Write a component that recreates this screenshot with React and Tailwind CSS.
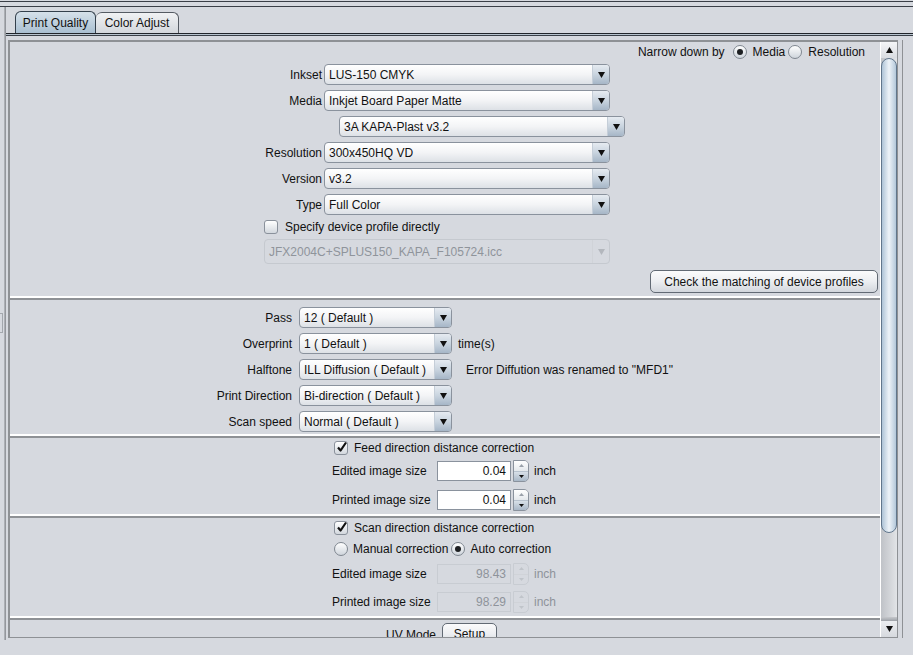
import React from 'react'

function Arrow({ up = false, w = 7, h = 6 }) {
  return (
    <svg width={w} height={h} viewBox={`0 0 ${w} ${h}`} aria-hidden>
      <polygon points={up ? `0,${h} ${w},${h} ${w / 2},0` : `0,0 ${w},0 ${w / 2},${h}`} fill="currentColor" />
    </svg>
  )
}

function Combo({ value, className = '', disabled = false }) {
  return (
    <div
      className={[
        'flex shrink-0 overflow-hidden rounded-[4px] border',
        disabled
          ? 'h-[25px] border-[#c5c9cf] bg-[#d6d9df] text-[#8f949b]'
          : 'h-[21px] border-[#8a929d] bg-gradient-to-b from-[#ffffff] via-[#f3f4f6] to-[#dde1e6]',
        className,
      ].join(' ')}
    >
      <div className="flex min-w-0 flex-1 items-center truncate pl-[4px]">{value}</div>
      <div
        className={[
          'flex w-[17px] items-center justify-center border-l',
          disabled
            ? 'border-[#d0d3d8] text-[#b3b7bd]'
            : 'border-[#c5ced8] bg-gradient-to-b from-[#e6ebf1] via-[#c9d4df] to-[#a6b6c7] text-[#111]',
        ].join(' ')}
      >
        <Arrow />
      </div>
    </div>
  )
}

function Check({ checked = false }) {
  return (
    <div className="relative flex h-[14px] w-[14px] shrink-0 items-center justify-center rounded-[3px] border border-[#8a919b] bg-gradient-to-b from-[#ffffff] to-[#d3d8de]">
      {checked ? (
        <svg width="12" height="12" viewBox="0 0 12 12" className="absolute -top-[1px] left-[1px]" aria-hidden>
          <path d="M2 6.5 L4.6 9.5 L10 1.5" fill="none" stroke="#111" strokeWidth="2.2" strokeLinejoin="round" />
        </svg>
      ) : null}
    </div>
  )
}

function Radio({ checked = false }) {
  return (
    <div className="flex h-[14px] w-[14px] shrink-0 items-center justify-center rounded-full border border-[#7f8790] bg-gradient-to-b from-[#ffffff] to-[#cfd5dc]">
      {checked ? <div className="h-[6px] w-[6px] rounded-full bg-[#1d1f22]" /> : null}
    </div>
  )
}

function Field({ value, disabled = false }) {
  return (
    <div className="flex items-center">
      <div
        className={[
          'flex h-[20px] w-[74px] items-center justify-end border pr-[4px]',
          disabled ? 'border-[#c8ccd2] bg-[#d6d9df] text-[#8e939a]' : 'border-[#8a929d] bg-white text-[#111]',
        ].join(' ')}
      >
        {value}
      </div>
      <div
        className={[
          'ml-[2px] flex h-[22px] w-[16px] flex-col overflow-hidden rounded-r-[5px] border',
          disabled ? 'border-[#c8ccd2]' : 'border-[#8a929d]',
        ].join(' ')}
      >
        <div
          className={[
            'flex flex-1 items-center justify-center',
            disabled ? 'text-[#c0c4ca]' : 'bg-gradient-to-b from-white to-[#e4e8ec] text-[#9aa1aa]',
          ].join(' ')}
        >
          <Arrow up w={5} h={3} />
        </div>
        <div
          className={[
            'flex flex-1 items-center justify-center border-t',
            disabled
              ? 'border-[#d0d3d8] text-[#c0c4ca]'
              : 'border-[#b7c2ce] bg-gradient-to-b from-[#d8e0e8] to-[#a9b8c8] text-[#111]',
          ].join(' ')}
        >
          <Arrow w={5} h={3} />
        </div>
      </div>
      <span className={['ml-[5px]', disabled ? 'text-[#8e939a]' : ''].join(' ')}>inch</span>
    </div>
  )
}

function Button({ children, className = '' }) {
  return (
    <div
      className={[
        'flex items-center justify-center rounded-[5px] border border-[#626a74] bg-gradient-to-b from-[#fbfbfc] via-[#eceef1] to-[#d3d7dd]',
        className,
      ].join(' ')}
    >
      {children}
    </div>
  )
}

const S1_ROWS = [
  { label: 'Inkset', value: 'LUS-150 CMYK' },
  { label: 'Media', value: 'Inkjet Board Paper Matte' },
  { label: '', value: '3A KAPA-Plast v3.2', shifted: true },
  { label: 'Resolution', value: '300x450HQ VD' },
  { label: 'Version', value: 'v3.2' },
  { label: 'Type', value: 'Full Color' },
]

const S2_ROWS = [
  { label: 'Pass', value: '12 ( Default )' },
  { label: 'Overprint', value: '1 ( Default )', after: 'time(s)', gap: 'ml-[6px]' },
  { label: 'Halftone', value: 'ILL Diffusion ( Default )', after: 'Error Diffution was renamed to "MFD1"', gap: 'ml-[14px]' },
  { label: 'Print Direction', value: 'Bi-direction ( Default )' },
  { label: 'Scan speed', value: 'Normal ( Default )' },
]

export default function App() {
  return (
    <div className="h-[655px] w-[913px] overflow-hidden bg-[#d6d9df] font-['Liberation_Sans',Arial,sans-serif] text-[12px] leading-none text-[#111]">
      <div className="mt-[1px] h-[1px] bg-[#3a3f47]" />
      <div className="mt-[4px] h-[1px] bg-[#3a3f47]" />

      <div className="flex">
        {/* left gutter */}
        <div className="w-[4px]">
          <div className="ml-[0px] mt-[306px] h-[20px] w-[3px] border border-l-0 border-[#a3a7ad]" />
        </div>
        <div className="h-[633px] w-[2px] bg-gradient-to-r from-[#b9bcc1] to-[#878a90]" />

        <div className="flex min-w-0 flex-1 flex-col">
          {/* tabs */}
          <div className="flex pl-[9px] pt-[4px]">
            <div className="flex h-[22px] w-[81px] items-center justify-center rounded-t-[6px] border border-b-0 border-[#34404c] bg-gradient-to-b from-[#d6e1ea] to-[#a9bfd1]">
              Print Quality
            </div>
            <div className="mt-[1px] flex h-[21px] w-[83px] items-center justify-center rounded-t-[6px] border border-b-0 border-l-0 border-[#555b63] bg-gradient-to-b from-[#f1f2f4] to-[#d3d7dc]">
              Color Adjust
            </div>
          </div>
          <div className="h-[1px] bg-[#20242a]" />
          <div className="h-[1px] bg-[#b7c3ce]" />
          <div className="h-[1px] bg-[#3a4048]" />

          <div className="mt-[4px] flex">
            {/* scroll pane */}
            <div className="ml-[2px] flex h-[598px] w-[890px] border-l-2 border-t-2 border-r border-b border-[#8e9195]">
              <div className="h-[595px] w-[871px] overflow-hidden border-r border-white">
                {/* section 1 */}
                <div className="flex h-[256px] flex-col border-b-2 border-white">
                  <div className="mt-[2px] flex h-[16px] items-center justify-end pr-[15px]">
                    <span>Narrow down by</span>
                    <span className="ml-[8px]"><Radio checked /></span>
                    <span className="ml-[6px]">Media</span>
                    <span className="ml-[3px]"><Radio /></span>
                    <span className="ml-[6px]">Resolution</span>
                  </div>
                  {S1_ROWS.map((r, i) => (
                    <div key={r.value} className={['flex h-[21px] items-center', i === 0 ? 'mt-[4px]' : 'mt-[5px]'].join(' ')}>
                      {r.shifted ? (
                        <Combo value={r.value} className="ml-[329px] w-[286px]" />
                      ) : (
                        <>
                          <div className="w-[312px] text-right">{r.label}</div>
                          <Combo value={r.value} className="ml-[2px] w-[286px]" />
                        </>
                      )}
                    </div>
                  ))}
                  <div className="mt-[5px] flex h-[14px] items-center pl-[254px]">
                    <Check />
                    <span className="ml-[7px]">Specify device profile directly</span>
                  </div>
                  <div className="mt-[5px] flex pl-[254px]">
                    <Combo value="JFX2004C+SPLUS150_KAPA_F105724.icc" disabled className="w-[346px]" />
                  </div>
                  <div className="mt-[6px] flex justify-end pr-[2px]">
                    <Button className="h-[23px] w-[228px]">Check the matching of device profiles</Button>
                  </div>
                </div>

                {/* section 2 */}
                <div className="flex h-[138px] flex-col border-b-2 border-t-2 border-b-white border-t-[#8e9195]">
                  {S2_ROWS.map((r, i) => (
                    <div key={r.label} className={['flex h-[21px] items-center', i === 0 ? 'mt-[7px]' : 'mt-[5px]'].join(' ')}>
                      <div className="w-[282px] text-right">{r.label}</div>
                      <Combo value={r.value} className="ml-[7px] w-[153px]" />
                      {r.after ? <span className={r.gap}>{r.after}</span> : null}
                    </div>
                  ))}
                </div>

                {/* section 3 */}
                <div className="flex h-[80px] flex-col border-b-2 border-t-2 border-b-white border-t-[#8e9195] pl-[322px]">
                  <div className="mt-[3px] flex h-[14px] items-center pl-[2px]">
                    <Check checked />
                    <span className="ml-[6px]">Feed direction distance correction</span>
                  </div>
                  <div className="mt-[5px] flex h-[22px] items-center">
                    <div className="w-[105px]">Edited image size</div>
                    <Field value="0.04" />
                  </div>
                  <div className="mt-[7px] flex h-[22px] items-center">
                    <div className="w-[105px]">Printed image size</div>
                    <Field value="0.04" />
                  </div>
                </div>

                {/* section 4 */}
                <div className="flex h-[102px] flex-col border-b-2 border-t-2 border-b-white border-t-[#8e9195] pl-[322px]">
                  <div className="mt-[3px] flex h-[14px] items-center pl-[2px]">
                    <Check checked />
                    <span className="ml-[6px]">Scan direction distance correction</span>
                  </div>
                  <div className="mt-[7px] flex h-[14px] items-center pl-[2px]">
                    <Radio />
                    <span className="ml-[5px]">Manual correction</span>
                    <span className="ml-[3px]"><Radio checked /></span>
                    <span className="ml-[5px]">Auto correction</span>
                  </div>
                  <div className="mt-[7px] flex h-[22px] items-center">
                    <div className="w-[105px]">Edited image size</div>
                    <Field value="98.43" disabled />
                  </div>
                  <div className="mt-[6px] flex h-[22px] items-center">
                    <div className="w-[105px]">Printed image size</div>
                    <Field value="98.29" disabled />
                  </div>
                </div>

                {/* section 5 */}
                <div className="flex h-[40px] border-t-2 border-[#8e9195]">
                  <div className="mt-[9px] w-[426px] text-right">UV Mode</div>
                  <Button className="ml-[6px] mt-[3px] h-[22px] w-[55px]">Setup</Button>
                </div>
              </div>

              {/* scrollbar */}
              <div className="flex w-[16px] flex-col bg-gradient-to-r from-[#bfc2c7] to-[#e2e4e7]">
                <div className="flex h-[16px] items-center justify-center bg-gradient-to-b from-[#f4f5f7] to-[#d9dce1] text-[#111]">
                  <Arrow up />
                </div>
                <div className="relative flex-1">
                  <div className="absolute left-0 top-0 h-[475px] w-[16px] rounded-[8px] border border-[#61768c] bg-gradient-to-r from-[#aec3d6] via-[#eef3f8] to-[#b4c8da]" />
                  <div className="absolute bottom-0 left-0 h-[4px] w-[16px] bg-gradient-to-b from-[#c6c8cc] to-[#9da1a7]" />
                </div>
                <div className="flex h-[16px] items-center justify-center bg-gradient-to-b from-[#eceef1] to-[#d6d9de] text-[#111]">
                  <Arrow />
                </div>
              </div>
            </div>
            <div className="ml-[4px] h-[598px] w-[1px] bg-[#8e9195]" />
          </div>
        </div>
      </div>
    </div>
  )
}
